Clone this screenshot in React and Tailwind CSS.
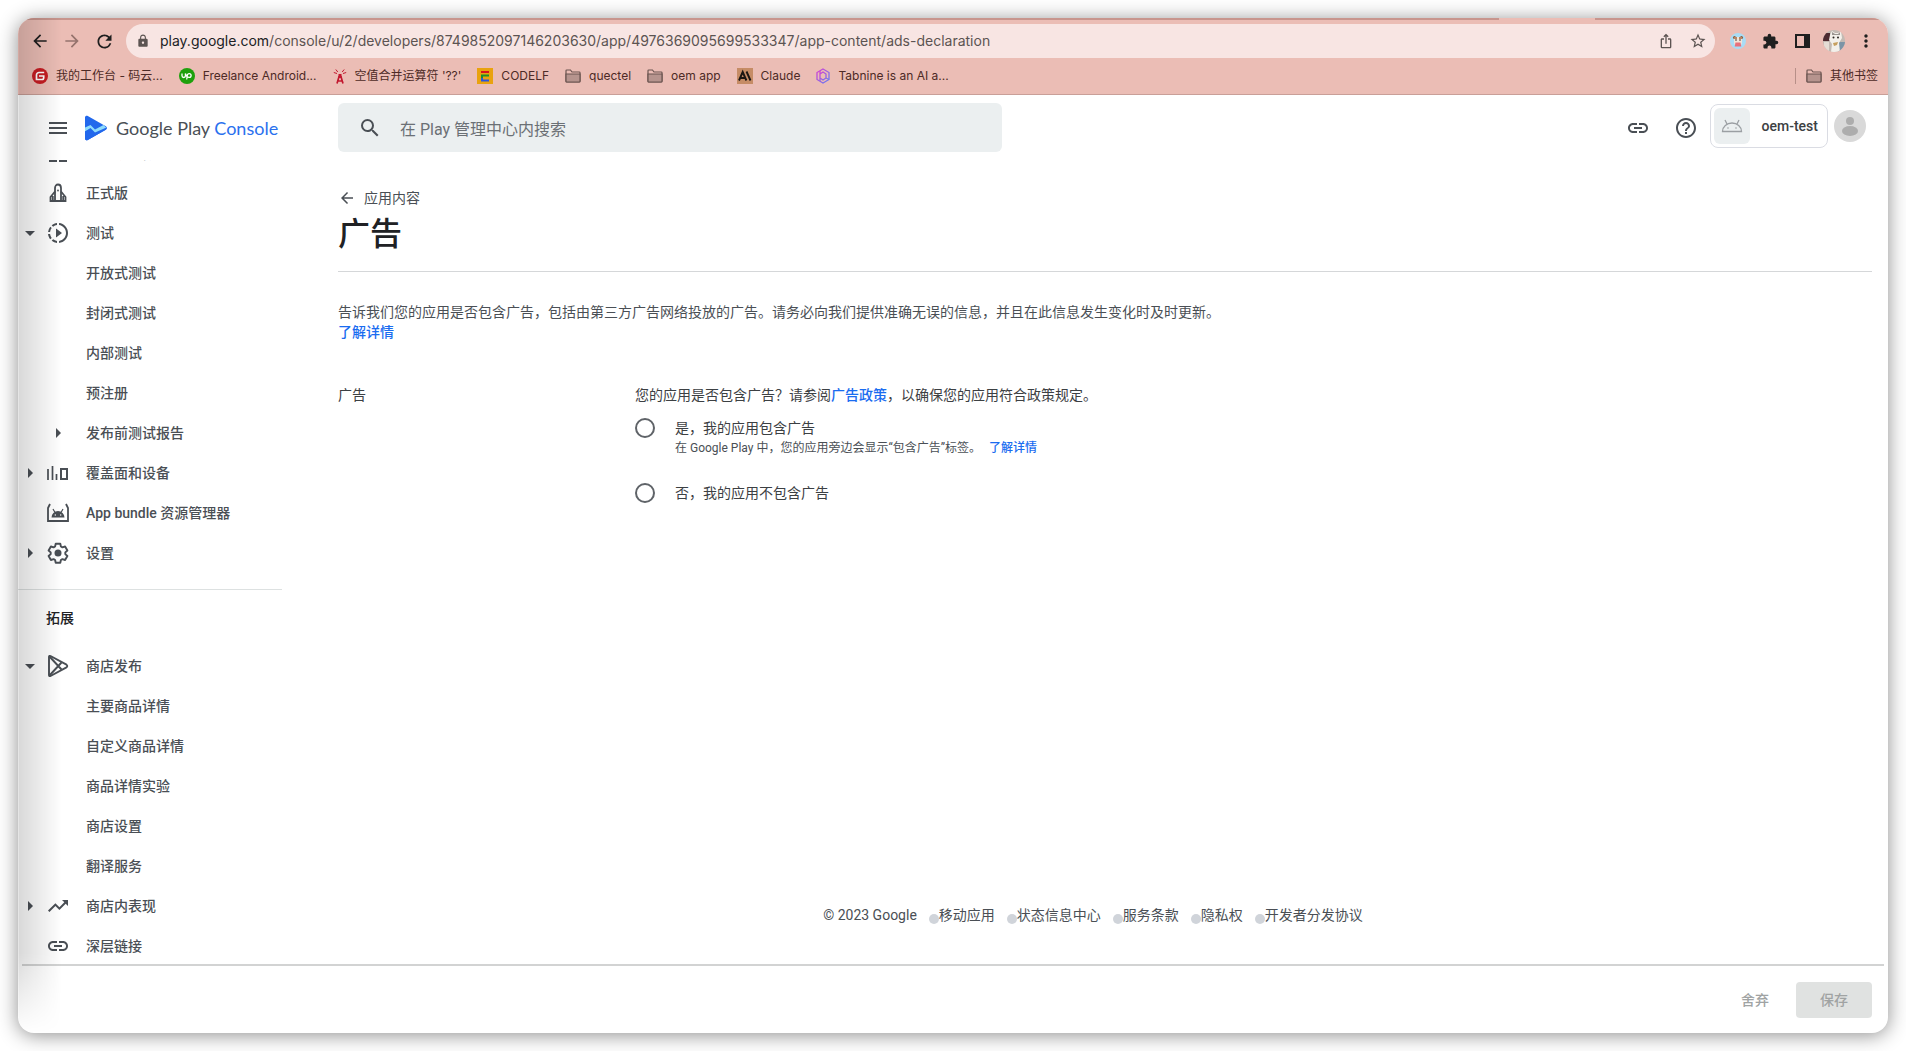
import React from "react";
import {
  MdArrowBack,
  MdArrowDropDown,
  MdArrowForward,
  MdArrowRight,
  MdExtension,
  MdHelpOutline,
  MdLink,
  MdLock,
  MdMenu,
  MdMoreVert,
  MdOutlineIosShare,
  MdOutlineSlowMotionVideo,
  MdRefresh,
  MdSearch,
  MdStarOutline,
  MdTrendingUp,
} from "react-icons/md";

const GiteeIcon = () => (
  <svg width="16" height="16" viewBox="0 0 16 16">
    <circle cx="8" cy="8" r="8" fill="#c71d23" />
    <path d="M12.200 4.500H7A2.500 2.500 0 0 0 4.500 7v4.500H10a1.700 1.700 0 0 0 1.700-1.700V8H7" fill="none" stroke="#fff" strokeWidth="1.700" />
  </svg>
);

const UpworkIcon = () => (
  <svg width="16" height="16" viewBox="0 0 16 16">
    <circle cx="8" cy="8" r="8" fill="#1ea00c" />
    <path
      d="M3 5.500v2.300a1.700 1.700 0 0 0 3.400 0V5.500c.6 2 1.700 3.900 3.800 3.900a1.900 1.900 0 1 0-1.900-1.900L7.700 11.500"
      fill="none"
      stroke="#fff"
      strokeWidth="1.300"
    />
  </svg>
);

const TowerIcon = () => (
  <svg width="14" height="16" viewBox="0 0 14 16" fill="none" stroke="#c2182f">
    <path d="M6.200 8 4 15.500M7.800 8l2.200 7.500M5 13h4" strokeWidth="1.700" />
    <path d="M5.500 6h3v4h-3z" fill="#c2182f" stroke="none" />
    <path d="M4.800 4 2.800 1.500M9.200 4l2-2.500M4 5.500.800 4.500M10 5.500l3.200-1" />
  </svg>
);

const CodelfIcon = () => (
  <svg width="16" height="16" viewBox="0 0 16 16" fill="none" strokeWidth="2">
    <path d="M0 0h16v16H0z" fill="#e9a20f" />
    <path d="M4 4h8" stroke="#d9141c" />
    <path d="M12 7.500H5V10" stroke="#1b8f2a" />
    <path d="M5 10v2.500h7" stroke="#2854e0" />
  </svg>
);

const FolderIcon = () => (
  <svg width="16" height="14" viewBox="0 0 16 14" fill="none" stroke="#6b5450" strokeWidth="1.200">
    <path d="M1 12V1.700c0-.4.300-.7.700-.7h3.800l1.500 2h7.300c.4 0 .7.300.7.700V12c0 .6-.4 1-1 1H2c-.6 0-1-.4-1-1z" />
    <path d="M1 5h14v7.200c0 .5-.3.800-.8.800H1.800c-.5 0-.8-.3-.8-.8z" fill="#b6948e" />
  </svg>
);

const ClaudeIcon = () => (
  <svg width="16" height="16" viewBox="0 0 16 16" fill="none" stroke="#1b1613" strokeWidth="1.900">
    <path d="M0 0h16v16H0z" fill="#c68c66" stroke="none" />
    <path d="M2 12.500 5.700 4l3.700 8.500M3.500 10h4.400M9.500 3.500l4 9" />
  </svg>
);

const TabnineIcon = () => (
  <svg width="14" height="16" viewBox="0 0 14 16" fill="none" strokeWidth="1.300">
    <defs>
      <linearGradient id="tabnine" x1="0" y1="0" x2="1" y2="1">
        <stop offset="0" stopColor="#d63fd0" />
        <stop offset="1" stopColor="#5f7df5" />
      </linearGradient>
    </defs>
    <g stroke="url(#tabnine)">
      <path d="M7 1l6 3.500v7L7 15l-6-3.500v-7z" />
      <path d="M4 3v10M4 6l3-2 3 2v4l-3 2-3-2M10 10l3 1.500" />
    </g>
  </svg>
);

const HamsterIcon = () => (
  <svg width="16" height="16" viewBox="0 0 16 16">
    <circle cx="8" cy="8" r="8" fill="#a9dcf5" />
    <circle cx="4.500" cy="4.500" r="1.500" fill="#8b5a3c" />
    <circle cx="11.500" cy="4.500" r="1.500" fill="#8b5a3c" />
    <path d="M4 4h8v5a4 4 0 0 1-8 0z" fill="#f3e3d6" />
    <path d="M4 4h3v2H4zM9 4h3v2H9z" fill="#b98461" />
    <circle cx="6" cy="7" r=".8" fill="#3b2a22" />
    <circle cx="10" cy="7" r=".8" fill="#3b2a22" />
    <path d="M5.500 9.500h5l.8 4h-6.600z" fill="#e8707a" />
  </svg>
);

const CatAvatar = () => (
  <svg width="22" height="22" viewBox="0 0 22 22">
    <clipPath id="cat">
      <circle cx="11" cy="11" r="11" />
    </clipPath>
    <g clipPath="url(#cat)">
      <path d="M0 0h22v22H0z" fill="#c3bab3" />
      <path d="M0 3h7v8H0z" fill="#4d2a30" />
      <path d="M15 12h7v10h-7z" fill="#7c94a6" />
      <path d="M1 12h5v10H1z" fill="#e5ddd5" />
      <path d="M7 5l2-4 3 2h3l3-2 1 7-3 5 1 9H8l1-8-3-4z" fill="#f3f0ea" />
      <path d="M9 2l3 2h3l2-2v3H9z" fill="#9a9590" />
      <circle cx="10.500" cy="7.500" r="1" fill="#2b2622" />
      <circle cx="15" cy="7.500" r="1" fill="#2b2622" />
      <path d="M10 13l5-1-1 3-3 1z" fill="#c7a05e" />
    </g>
  </svg>
);

const SidePanelIcon = () => (
  <svg width="15" height="14" viewBox="0 0 15 14">
    <path d="M0 0h15v14H0zM2 2v10h7V2z" fill="#1f1f1f" fillRule="evenodd" />
  </svg>
);

const PlayConsoleLogo = () => (
  <svg width="24" height="26" viewBox="0 0 24 26">
    <path d="M1 2.500C1 1 2.500.300 3.800 1l18 10.300c1.400.8 1.400 2.600 0 3.400L3.800 25C2.500 25.700 1 25 1 23.500z" fill="#2268ec" />
    <path d="M1 12.500 6.500 10l4.500 4.500 8.500-4.500 3 3-11.500 6L6.500 14 1 16.500z" fill="#8fdcfb" />
    <path d="M1 16.500 6.500 13l4.500 4.500 11.500-5c.3.900 0 1.700-.7 2.200L3.800 25C2.500 25.700 1 25 1 23.500z" fill="#2268ec" />
  </svg>
);

const RocketIcon = () => (
  <svg width="20" height="20" viewBox="0 0 20 20" fill="none" stroke="currentColor" strokeWidth="1.800">
    <path d="M7 18V5c0-2 1.300-3.500 3-3.500S13 3 13 5v13" />
    <path d="M2.500 18v-4L7 8.500M17.500 18v-4L13 8.500M1.600 18h16.800M4.800 18v-5M15.200 18v-5" />
    <circle cx="10" cy="7.500" r=".9" fill="currentColor" stroke="none" />
  </svg>
);

const ReachIcon = () => (
  <svg width="22" height="16" viewBox="0 0 22 16" fill="none" stroke="currentColor" strokeWidth="2">
    <path d="M1 15V4M5.500 15V1M9.500 15V9" strokeWidth="1.700" />
    <path d="M14 4h6v10h-6z" />
  </svg>
);

const BundleIcon = () => (
  <svg width="24" height="20" viewBox="0 0 24 20" fill="none" stroke="currentColor">
    <path d="M4 1 2 5v13h20V5l-2-4" strokeWidth="1.800" />
    <path d="M5.500 14.500a6.500 6.500 0 0 1 13 0z" fill="currentColor" stroke="none" />
    <path d="m7 6 2 3.500M17 6l-2 3.500" strokeWidth="1.200" />
    <circle cx="9.300" cy="12" r=".7" fill="#fff" stroke="none" />
    <circle cx="14.700" cy="12" r=".7" fill="#fff" stroke="none" />
  </svg>
);

const GearIcon = () => (
  <svg width="24" height="24" viewBox="0 0 24 24">
    <path
      d="M9.700 2.800h4.600l.6 2.700 1.500.9 2.700-.9 2.300 4-2.100 1.900v1.700l2.100 1.900-2.300 4-2.700-.9-1.500.9-.6 2.700H9.700L9.100 19l-1.500-.9-2.700.9-2.300-4 2.100-1.900v-1.700L2.600 9.500l2.300-4 2.700.9 1.500-.9z"
      fill="none"
      stroke="currentColor"
      strokeWidth="1.900"
      strokeLinejoin="round"
    />
    <circle cx="12" cy="12" r="3.500" fill="currentColor" />
  </svg>
);

const StoreIcon = () => (
  <svg width="22" height="24" viewBox="0 0 22 24" fill="none" stroke="currentColor" strokeWidth="1.900" strokeLinejoin="round">
    <path d="M2 2.800C2 2 2.800 1.600 3.500 2l16 8.700c1 .6 1 2 0 2.600L3.500 22c-.7.400-1.500 0-1.500-.8z" />
    <path d="m2.500 2.500 12 13M2.500 21.500l12-13" />
  </svg>
);

const DashboardIcon = () => (
  <svg width="20" height="20" viewBox="0 0 20 20" fill="none" stroke="currentColor" strokeWidth="2">
    <path d="M2 2h6v6H2zM12 2h6v6h-6zM2 12h6v6H2zM12 12h6v6h-6z" />
  </svg>
);

const AndroidIcon = () => (
  <svg width="22" height="14" viewBox="0 0 22 14" fill="none" stroke="#9b9fa3" strokeWidth="1.300">
    <path d="M1.500 12.500a9.500 8.500 0 0 1 19 0z" />
    <path d="M6 5 4 1M16 5l2-4" />
    <circle cx="7" cy="9" r=".8" fill="#9b9fa3" stroke="none" />
    <circle cx="15" cy="9" r=".8" fill="#9b9fa3" stroke="none" />
  </svg>
);

const bookmarks = [
  { label: "我的工作台 - 码云...", icon: <GiteeIcon /> },
  { label: "Freelance Android...", icon: <UpworkIcon /> },
  { label: "空值合并运算符 '??'", icon: <TowerIcon /> },
  { label: "CODELF", icon: <CodelfIcon /> },
  { label: "quectel", icon: <FolderIcon /> },
  { label: "oem app", icon: <FolderIcon /> },
  { label: "Claude", icon: <ClaudeIcon /> },
  { label: "Tabnine is an AI a...", icon: <TabnineIcon /> },
];

const releaseItems = [
  { label: "发布版本概览", icon: <DashboardIcon /> },
  { label: "正式版", icon: <RocketIcon /> },
  { label: "测试", icon: <MdOutlineSlowMotionVideo size={24} />, arrow: "down" },
  { label: "开放式测试" },
  { label: "封闭式测试" },
  { label: "内部测试" },
  { label: "预注册" },
  { label: "发布前测试报告", icon: <MdArrowRight size={24} /> },
  { label: "覆盖面和设备", icon: <ReachIcon />, arrow: "right" },
  { label: "App bundle 资源管理器", icon: <BundleIcon /> },
  { label: "设置", icon: <GearIcon />, arrow: "right" },
];

const growItems = [
  { label: "商店发布", icon: <StoreIcon />, arrow: "down" },
  { label: "主要商品详情" },
  { label: "自定义商品详情" },
  { label: "商品详情实验" },
  { label: "商店设置" },
  { label: "翻译服务" },
  { label: "商店内表现", icon: <MdTrendingUp size={24} />, arrow: "right" },
  { label: "深层链接", icon: <MdLink size={24} /> },
];

const footerLinks = ["移动应用", "状态信息中心", "服务条款", "隐私权", "开发者分发协议"];

const NavItem = ({ item }) => (
  <a href="#" className="flex h-10 shrink-0 items-center text-sm font-medium text-[#4a4f55]">
    <span className="flex w-6 justify-center">
      {item.arrow === "down" && <MdArrowDropDown size={24} />}
      {item.arrow === "right" && <MdArrowRight size={24} />}
    </span>
    <span className="mr-3 flex w-8 justify-center">{item.icon}</span>
    {item.label}
  </a>
);

const BrowserBar = () => (
  <div className="shrink-0 border-b border-[#c99f98] bg-[#ebbdb5] font-[Inter,'Noto_Sans_CJK_SC',sans-serif]">
    <div className="flex h-[2px] justify-end bg-[#c8958d]">
      <div className="mr-[293px] w-24 bg-[#ebbdb5]"></div>
    </div>
    <div className="mt-1 flex h-[34px] items-center pr-1.5 pl-1.5 text-[#1f1f1f]">
      <button aria-label="后退" className="flex w-8 justify-center">
        <MdArrowBack size={20} />
      </button>
      <button aria-label="前进" className="flex w-8 justify-center text-[#95736d]">
        <MdArrowForward size={20} />
      </button>
      <button aria-label="重新加载" className="flex w-8 justify-center">
        <MdRefresh size={21} />
      </button>
      <div className="mr-[7px] ml-1.5 flex h-full min-w-0 flex-1 items-center rounded-full bg-[#f8e5e3] pr-px pl-2.5 text-[#5c5452]">
        <MdLock size={14} className="mr-2.5 shrink-0" />
        <button className="min-w-0 flex-1 truncate text-left font-['Inter',sans-serif] text-sm">
          <span className="text-[#202124]">play.google.com</span>
          /console/u/2/developers/8749852097146203630/app/4976369095699533347/app-content/ads-declaration
        </button>
        <button aria-label="分享" className="flex w-8 justify-center">
          <MdOutlineIosShare size={16} />
        </button>
        <button aria-label="收藏" className="flex w-8 justify-center">
          <MdStarOutline size={18} />
        </button>
      </div>
      <button aria-label="Hamster" className="flex w-8 justify-center">
        <HamsterIcon />
      </button>
      <button aria-label="扩展程序" className="flex w-8 justify-center">
        <MdExtension size={17} />
      </button>
      <button aria-label="侧边栏" className="flex w-8 justify-center">
        <SidePanelIcon />
      </button>
      <button aria-label="个人资料" className="flex w-8 justify-center">
        <CatAvatar />
      </button>
      <button aria-label="更多" className="flex w-8 justify-center">
        <MdMoreVert size={20} />
      </button>
    </div>
    <div className="flex h-9 items-center gap-4 pr-2.5 pl-3.5 text-xs text-[#4d2a26]">
      {bookmarks.map((bookmark) => (
        <a key={bookmark.label} href="#" className="flex items-center gap-2 whitespace-nowrap">
          {bookmark.icon}
          {bookmark.label}
        </a>
      ))}
      <a href="#" className="ml-auto flex items-center gap-2 border-l border-[#b78f88] pl-2.5 whitespace-nowrap">
        <FolderIcon />
        其他书签
      </a>
    </div>
  </div>
);

const Header = () => (
  <header className="flex h-[65px] shrink-0 items-center pr-[22px]">
    <div className="flex w-80 shrink-0 items-center pl-7">
      <button aria-label="菜单" className="text-[#4a4f55]">
        <MdMenu size={24} />
      </button>
      <a href="#" className="ml-3.5 flex items-center gap-2 font-[Lato,sans-serif] text-lg text-[#4a4f55]">
        <PlayConsoleLogo />
        <span>
          Google Play <span className="text-[#2a70ee]">Console</span>
        </span>
      </a>
    </div>
    <label className="flex h-[49px] w-[664px] items-center gap-[18px] rounded-md bg-[#ebeff0] pl-5 text-[#4a4f55]">
      <MdSearch size={24} />
      <input
        type="search"
        placeholder="在 Play 管理中心内搜索"
        className="min-w-0 flex-1 bg-transparent pt-1 text-base outline-none placeholder:text-[#6b7075]"
      />
    </label>
    <div className="ml-auto flex items-center text-[#4a4f55]">
      <button aria-label="复制链接" className="mr-6">
        <MdLink size={24} />
      </button>
      <button aria-label="帮助" className="mr-3">
        <MdHelpOutline size={24} />
      </button>
      <button className="mb-1 flex h-11 items-center rounded-lg border border-[#dadce3] pr-[9px] pl-[3px] text-sm font-medium text-[#3c4043]">
        <span className="mr-3 flex h-9 w-9 items-center justify-center rounded-md bg-[#ebeff0]">
          <AndroidIcon />
        </span>
        oem-test
      </button>
      <button aria-label="账号" className="mb-1 ml-1.5 flex h-8 w-8 items-center justify-center rounded-full bg-[#d9d9d9]">
        <svg width="32" height="32" viewBox="0 0 32 32" fill="#adadad">
          <circle cx="16" cy="11" r="4" />
          <ellipse cx="16" cy="21" rx="8" ry="5" />
        </svg>
      </button>
    </div>
  </header>
);

const Sidebar = () => (
  <nav className="flex w-[280px] shrink-0 flex-col overflow-hidden">
    <div className="-mt-[27px] flex flex-col">
      {releaseItems.map((item) => (
        <NavItem key={item.label} item={item} />
      ))}
    </div>
    <hr className="mt-4 mr-4 shrink-0 border-[#dde1e1]" />
    <h2 className="flex h-14 shrink-0 items-center pl-7 text-sm font-medium text-[#202124]">拓展</h2>
    {growItems.map((item) => (
      <NavItem key={item.label} item={item} />
    ))}
  </nav>
);

const radioClass = "m-0 h-5 w-5 shrink-0 appearance-none rounded-full border-2 border-[#5f6368] checked:border-[6px]";

const AdsForm = () => (
  <main className="flex min-w-0 flex-1 flex-col">
    <div className="flex-1 pr-4 pl-10">
      <a href="#" className="mt-7 flex h-5 items-center gap-2 text-sm text-[#4a4f55]">
        <MdArrowBack size={18} />
        应用内容
      </a>
      <h1 className="mt-1.5 text-[32px] leading-10 font-medium text-[#202124]">广告</h1>
      <hr className="mt-[17px] border-[#d5d7d9]" />
      <p className="mt-[30px] text-sm leading-5 text-[#4a4f55]">
        告诉我们您的应用是否包含广告，包括由第三方广告网络投放的广告。请务必向我们提供准确无误的信息，并且在此信息发生变化时及时更新。
        <br />
        <a href="#" className="font-medium text-[#1a6cf0]">
          了解详情
        </a>
      </p>
      <fieldset className="mt-[43px] flex text-sm leading-5 text-[#3c4043]">
        <div className="w-[297px] shrink-0">广告</div>
        <div>
          <p>
            您的应用是否包含广告？请参阅
            <a href="#" className="font-medium text-[#1a6cf0]">
              广告政策
            </a>
            ，以确保您的应用符合政策规定。
          </p>
          <div className="mt-[13px] flex gap-5">
            <input id="ads-yes" type="radio" name="ads" className={radioClass} />
            <div>
              <label htmlFor="ads-yes">是，我的应用包含广告</label>
              <p className="text-xs leading-5 text-[#4a4f55]">
                在 Google Play 中，您的应用旁边会显示“包含广告”标签。
                <a href="#" className="ml-2 font-medium text-[#1a6cf0]">
                  了解详情
                </a>
              </p>
            </div>
          </div>
          <div className="mt-[25px] flex gap-5">
            <input id="ads-no" type="radio" name="ads" className={radioClass} />
            <label htmlFor="ads-no">否，我的应用不包含广告</label>
          </div>
        </div>
      </fieldset>
    </div>
    <footer className="mb-[39px] flex h-5 items-center justify-center gap-3 text-sm text-[#4a4f55]">
      <span>© 2023 Google</span>
      {footerLinks.map((link) => (
        <a key={link} href="#" className="flex items-center">
          <span className="mt-2 h-2.5 w-2.5 rounded-full bg-[#d0d4da]"></span>
          {link}
        </a>
      ))}
    </footer>
  </main>
);

const App = () => {
  return (
    <div className="h-screen bg-white p-[18px] font-[Roboto,'Noto_Sans_CJK_SC',sans-serif]" lang="zh-CN">
      <div className="relative flex h-full flex-col overflow-hidden rounded-2xl bg-white shadow-[0_2px_20px_rgba(0,0,0,0.45)]">
        <BrowserBar />
        <Header />
        <div className="flex min-h-0 flex-1">
          <Sidebar />
          <AdsForm />
        </div>
        <div className="mx-1 h-[2px] shrink-0 bg-[#d2d3d3]"></div>
        <div className="flex h-[67px] shrink-0 items-center justify-end gap-3 pr-4 text-sm font-medium text-[#a0a3a3]">
          <button disabled className="h-9 px-[15px]">
            舍弃
          </button>
          <button disabled className="h-9 w-[76px] rounded bg-[#e0e2e1]">
            保存
          </button>
        </div>
        <div className="pointer-events-none absolute inset-y-0 left-0 w-11 border-l border-black/10 bg-linear-to-r from-black/15 to-transparent mask-b-from-[calc(100%-80px)]"></div>
      </div>
    </div>
  );
};

export default App;
